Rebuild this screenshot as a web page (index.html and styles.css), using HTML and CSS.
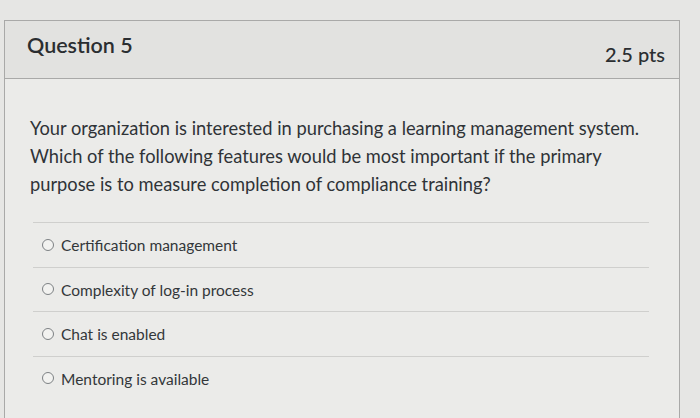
FILE: index.html
```html
<!DOCTYPE html>
<html>
<head>
<meta charset="utf-8">
<link rel="stylesheet" href="styles.css">
</head>
<body>
<div class="page">
  <div class="card">
    <div class="card-header">
      <span class="q-title">Question 5</span>
      <span class="q-points">2.5 pts</span>
    </div>
    <div class="card-body">
      <p class="q-text">Your organization is interested in purchasing a learning management system. Which of the following features would be most important if the primary purpose is to measure completion of compliance training?</p>
      <div class="answers">
        <label class="answer"><span class="radio"></span><span class="answer-text">Certification management</span></label>
        <label class="answer"><span class="radio"></span><span class="answer-text">Complexity of log-in process</span></label>
        <label class="answer"><span class="radio"></span><span class="answer-text">Chat is enabled</span></label>
        <label class="answer"><span class="radio"></span><span class="answer-text">Mentoring is available</span></label>
      </div>
    </div>
  </div>
</div>
</body>
</html>
```
FILE: styles.css
```css
html, body {
  margin: 0;
  padding: 0;
  background: #e6e6e4;
  font-family: Lato, "Open Sans", sans-serif;
  color: #2f3337;
}
.page {
  padding: 20px 20px 0 4px;
  height: 418px;
  box-sizing: border-box;
  overflow: hidden;
}
.card {
  border: 1px solid #a9a9a8;
  border-bottom: none;
  background: #ebebe9;
  height: 420px;
}
.card-header {
  display: flex;
  justify-content: space-between;
  align-items: center;
  height: 58px;
  padding: 0 14px 0 22px;
  background: #e2e2e0;
  border-bottom: 1px solid #a9a9a8;
  box-sizing: border-box;
}
.q-title {
  font-size: 21.5px;
  font-weight: 600;
  color: #2b2e31;
  margin-top: -10px;
}
.q-points {
  font-size: 20px;
  font-weight: 500;
  color: #2b2e31;
  margin-top: 9px;
}
.card-body {
  padding: 35px 30px 0 25px;
}
.q-text {
  margin: 0;
  font-size: 18.3px;
  line-height: 28px;
  color: #2f3337;
  max-width: 625px;
}
.answers {
  margin-top: 24px;
  margin-left: 3px;
}
.answer {
  display: flex;
  align-items: center;
  height: 43.5px;
  border-top: 1px solid #cfcfcd;
  padding: 0 0 0 9px;
  gap: 7px;
  font-size: 15.5px;
  color: #33373a;
}
.radio {
  width: 10px;
  height: 10px;
  border: 1.5px solid #7d8184;
  border-radius: 50%;
  background: #f2f2f0;
  flex: none;
}
.answer-text {
  padding-top: 1px;
}
```
